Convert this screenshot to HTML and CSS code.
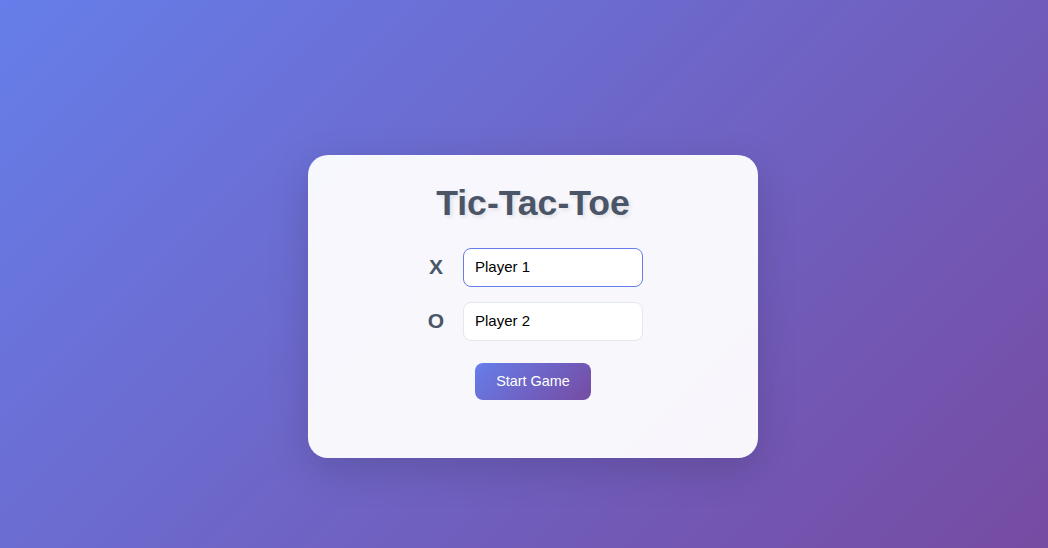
FILE: index.html
```html
<!DOCTYPE html>
<html lang="en">
<head>
<meta charset="utf-8">
<title>Tic-Tac-Toe</title>
<link rel="stylesheet" href="styles.css">
</head>
<body>
  <div class="card">
    <h1 class="title">Tic-Tac-Toe</h1>
    <div class="players">
      <div class="player-row">
        <span class="mark">X</span>
        <input class="name-input focused" type="text" value="Player 1">
      </div>
      <div class="player-row">
        <span class="mark">O</span>
        <input class="name-input" type="text" value="Player 2">
      </div>
    </div>
    <button class="start-btn" type="button">Start Game</button>
  </div>
</body>
</html>
```

FILE: styles.css
```css
* { box-sizing: border-box; }
html, body { margin: 0; height: 100%; }
body {
  font-family: "Liberation Sans", Arial, sans-serif;
  background: linear-gradient(135deg, #667eea 0%, #764ba2 100%);
  display: flex;
  align-items: center;
  justify-content: center;
  padding: 65px 0 0 18px;
}
.card {
  width: 450px;
  height: 303px;
  background: rgba(255, 255, 255, 0.95);
  border-radius: 20px;
  box-shadow: 0 12px 40px rgba(0, 0, 0, 0.15);
  padding-top: 28px;
  display: flex;
  flex-direction: column;
  align-items: center;
}
.title {
  margin: 0;
  font-size: 35.6px;
  font-weight: bold;
  color: #4a5568;
  line-height: 41px;
  text-shadow: 2px 2px 4px rgba(0, 0, 0, 0.1);
}
.players {
  margin-top: 24px;
  display: flex;
  flex-direction: column;
  gap: 15px;
}
.player-row {
  display: flex;
  align-items: center;
  gap: 12px;
  padding-right: 2px;
}
.mark {
  width: 30px;
  text-align: center;
  font-size: 21px;
  font-weight: bold;
  color: #4a5568;
  padding-bottom: 2px;
}
.name-input {
  width: 180px;
  height: 39px;
  padding: 0 11px 2px;
  border: 1px solid #e2e8f0;
  border-radius: 8px;
  background: #fff;
  font-family: "Liberation Sans", Arial, sans-serif;
  font-size: 15px;
  color: #000;
  outline: none;
}
.name-input.focused { border-color: #667eea; }
.start-btn {
  margin-top: 22px;
  height: 37px;
  padding: 0 21.5px 1px;
  border: none;
  border-radius: 8px;
  background: linear-gradient(135deg, #667eea 0%, #764ba2 100%);
  color: #fff;
  font-family: "Liberation Sans", Arial, sans-serif;
  font-size: 14.4px;
  cursor: pointer;
}
```
